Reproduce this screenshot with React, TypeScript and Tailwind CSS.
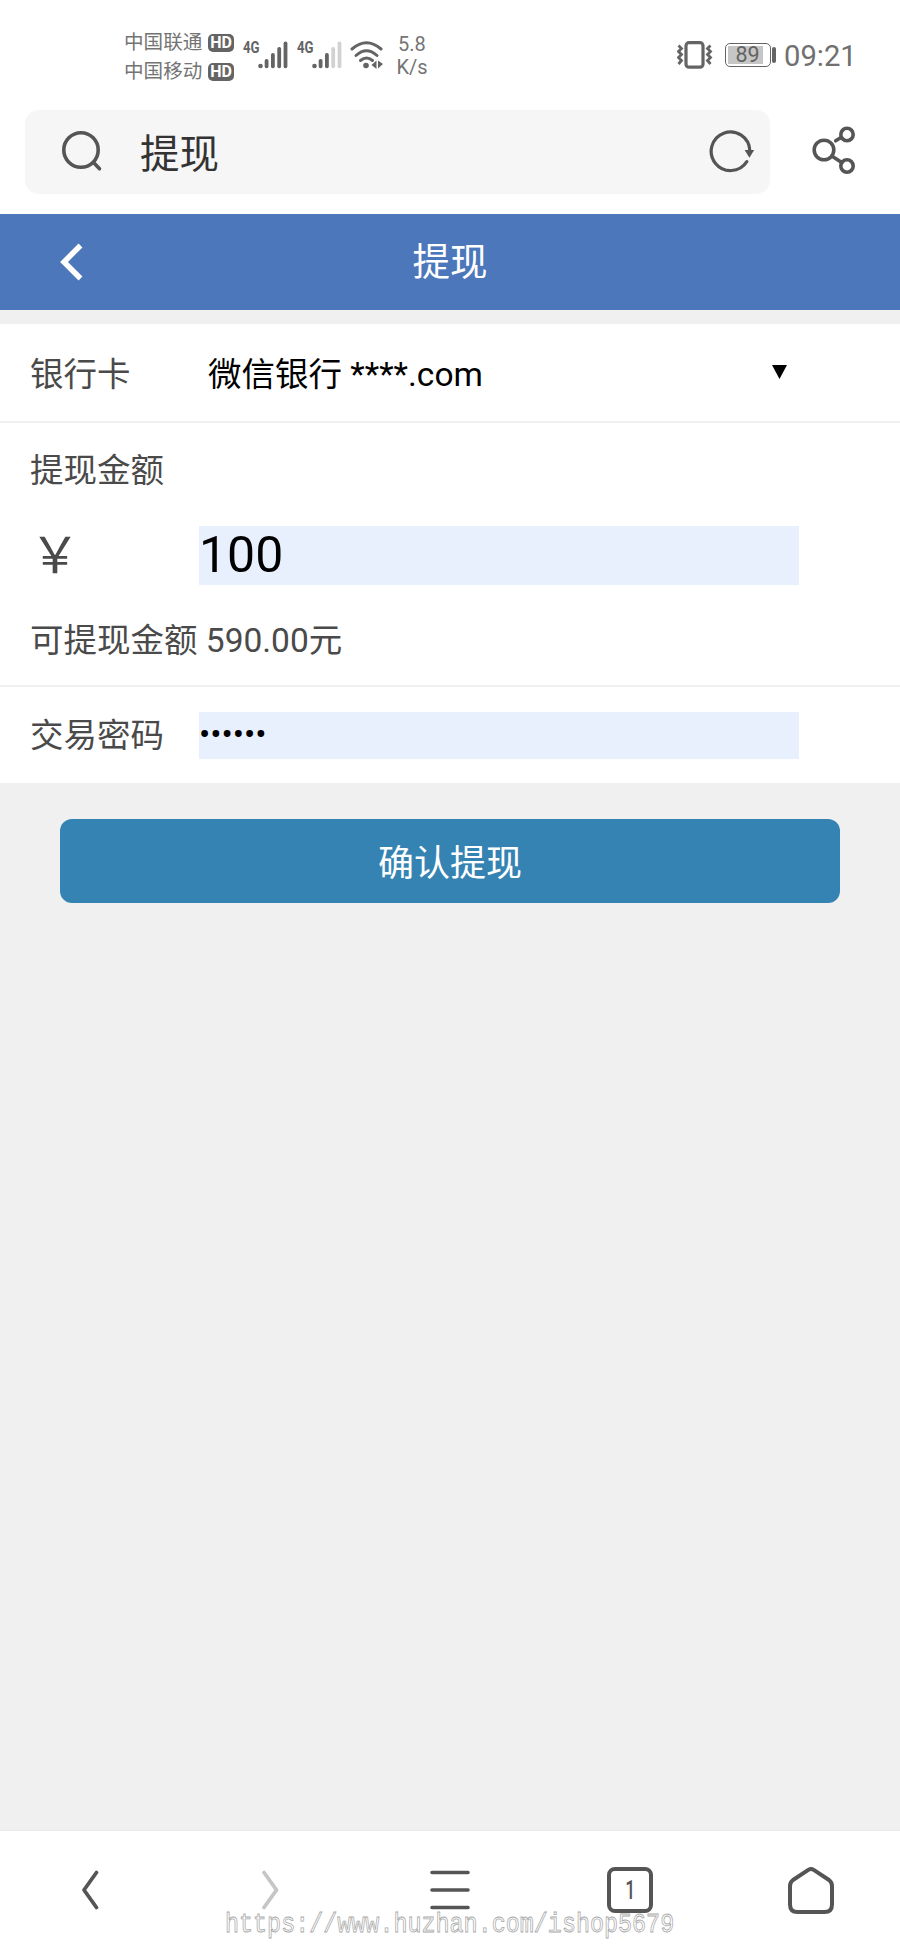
import React, { useState } from 'react';

const Bars = ({ dim = 0 }: { dim?: number }) => (
  <svg width="30" height="28" viewBox="0 0 30 28" fill="#646464">
    <circle cx="2.5" cy="25" r="2.3" />
    {[18, 12, 6, 0.5].map((y, i) => (
      <rect
        key={y}
        x={6.7 + i * 6.3}
        y={y}
        width="3.8"
        height={27.3 - y}
        rx="1.8"
        fill={i >= 4 - dim ? '#d2d2d2' : '#646464'}
      />
    ))}
  </svg>
);

const Signal = ({ dim = 0 }: { dim?: number }) => (
  <div className="flex">
    <span className="w-[15px] origin-left scale-x-[0.8] text-[16.5px] leading-[13px] font-bold">4G</span>
    <Bars dim={dim} />
  </div>
);

const Carrier = ({ name }: { name: string }) => (
  <div className="flex h-[29px] items-center">
    <span className="w-[84px] text-[19.6px] whitespace-nowrap text-[#747474]">{name}</span>
    <span className="flex h-[18px] w-[26px] items-center justify-center rounded-[5px] bg-[#646464] text-[16px] font-bold text-white">
      HD
    </span>
  </div>
);

const Wifi = () => (
  <svg width="34" height="28" viewBox="0 0 34 28" fill="none" stroke="#646464" strokeWidth="3" strokeLinecap="round">
    <path d="M2 8 Q16.5 -4.5 31 8" />
    <path d="M6 14.5 Q16.5 5 27 14.5" />
    <path d="M10.5 19.5 Q16.5 14.5 22.5 19.5" />
    <circle cx="16" cy="24.5" r="2.8" fill="#646464" stroke="none" />
    <path d="M21.5 24 L26.5 19.5 V28 Z M28 19.5 L33 23 L28 27.5 Z" fill="#646464" stroke="none" />
  </svg>
);

const Vibrate = () => (
  <svg width="36" height="28" viewBox="0 0 36 28" fill="none" stroke="#646464">
    <rect x="9" y="1.7" width="17" height="24.5" rx="3" strokeWidth="3.2" />
    <path d="M1.5 4.5 L4.5 7.5 L1.5 10.5 L4.5 13.5 L1.5 16.5 L4.5 19.5 L1.5 23" strokeWidth="2.8" />
    <path d="M33.5 4.5 L30.5 7.5 L33.5 10.5 L30.5 13.5 L33.5 16.5 L30.5 19.5 L33.5 23" strokeWidth="2.8" />
  </svg>
);

const StatusBar = () => (
  <div className="flex h-[110px] items-start pr-[43px] pl-[124px] leading-none text-[#646464]">
    <div className="mt-[28px] w-[119px]">
      <Carrier name="中国联通" />
      <Carrier name="中国移动" />
    </div>
    <div className="mt-[41px] flex gap-[9px]">
      <Signal />
      <Signal dim={2} />
    </div>
    <div className="mt-[41px] ml-[8px]">
      <Wifi />
    </div>
    <div className="mt-[33px] ml-[12px] w-[32px] text-center text-[20px] leading-[23px] text-[#747474]">
      <div>5.8</div>
      <div>K/s</div>
    </div>
    <div className="mt-[41px] ml-auto flex h-[28px] items-center">
      <Vibrate />
      <div className="ml-[12px] flex h-[24px] w-[46px] items-center rounded-[5px] border-[1.5px] border-[#646464] p-[2px]">
        <div className="flex h-full w-[35px] items-center justify-center bg-[#c6c6c6] pl-[4px] text-[21.5px]">89</div>
      </div>
      <div className="ml-px h-[16px] w-[4px] rounded-[2px] bg-[#646464]" />
      <span className="mt-[3px] ml-[8px] w-[73px] text-[29.2px] whitespace-nowrap text-[#707070]">09:21</span>
    </div>
  </div>
);

const AddressBar = () => (
  <div className="flex h-[104px] items-start pl-[25px]">
    <div className="flex h-[84px] w-[745px] items-center rounded-[14px] bg-[#f6f6f6] pr-[12px] pl-[35px]">
      <svg width="44" height="44" viewBox="0 0 44 44" fill="none" stroke="#555" strokeWidth="3.6" strokeLinecap="round">
        <circle cx="21" cy="20" r="17.2" />
        <path d="M33.5 32.5 L39.5 38.8" />
      </svg>
      <span className="mt-[6px] ml-[36px] text-[39.5px] leading-[56px] text-[#333]">提现</span>
      <svg className="ml-auto" width="50" height="44" viewBox="0 0 50 44">
        <path d="M38.8 31.6 A19.3 19.3 0 1 1 41.8 20.5" fill="none" stroke="#555" strokeWidth="3.2" strokeLinecap="round" />
        <path d="M36.6 20 H46.2 L41.4 27.7 Z" fill="#555" />
      </svg>
    </div>
    <svg className="mt-[15px] ml-[41px]" width="46" height="50" viewBox="0 0 46 50" fill="none" stroke="#555" strokeWidth="3.6" strokeLinecap="round">
      <circle cx="13" cy="25" r="9.8" />
      <circle cx="36" cy="9.5" r="6.2" />
      <circle cx="36" cy="41" r="6.2" />
      <path d="M24.7 15.8 L30 12.5 M21.5 31.5 L30 37" />
    </svg>
  </div>
);

const TabBar = () => (
  <nav className="grid h-[119px] grid-cols-5 justify-items-center bg-white pt-[35px]">
    <svg width="48" height="48" viewBox="0 0 48 48" fill="none" stroke="#555" strokeWidth="3.8" strokeLinecap="round" strokeLinejoin="round">
      <path d="M30.5 6.5 L18 24 L30.5 41.5" />
    </svg>
    <svg width="48" height="48" viewBox="0 0 48 48" fill="none" stroke="#c6c6c6" strokeWidth="3.8" strokeLinecap="round" strokeLinejoin="round">
      <path d="M18 6.5 L30.5 24 L18 41.5" />
    </svg>
    <svg width="48" height="48" viewBox="0 0 48 48" fill="none" stroke="#555" strokeWidth="3.6" strokeLinecap="round">
      <path d="M6 6.5 H42 M6 24 H42 M6 41.5 H42" />
    </svg>
    <div className="mt-px flex h-[46px] w-[46px] items-center justify-center rounded-[8px] border-4 border-[#555] text-[#555]">
      <span className="scale-x-[0.7] text-[25px] leading-none font-medium">1</span>
    </div>
    <svg width="48" height="48" viewBox="0 0 48 48" fill="none" stroke="#555" strokeWidth="4" strokeLinejoin="round">
      <path d="M22.3 3.9 Q25 2.3 27.7 3.9 L43 14 Q46 16.2 46 20 V38.5 Q46 46 38.5 46 H11.5 Q4 46 4 38.5 V20 Q4 16.2 7 14 Z" />
    </svg>
  </nav>
);

function App() {
  const [amount, setAmount] = useState('100');
  return (
    <div className="relative flex h-[1950px] w-[900px] flex-col overflow-hidden bg-white font-[Roboto,'Noto_Sans_CJK_SC',sans-serif] text-[#4a4a4a]">
      <StatusBar />
      <AddressBar />
      <header className="flex h-[96px] items-center bg-[#4c77bb] text-white">
        <svg className="ml-[57px]" width="28" height="40" viewBox="0 0 28 40" fill="none" stroke="#fff" strokeWidth="5.5">
          <path d="M23.5 3.5 L7 20 L23.5 36.5" />
        </svg>
        <h1 className="mr-[85px] flex-1 text-center text-[37.5px] leading-[56px]">提现</h1>
      </header>
      <main className="flex-1 border-b border-[#e8e8e8] bg-[#f0f0f0] pt-[14px] text-[33.5px] leading-[48px]">
        <section className="flex h-[99px] items-center border-b-2 border-[#f0f0f0] bg-white pt-[4px] pl-[30px]">
          <span className="w-[178px]">银行卡</span>
          <span className="w-[564px] text-black">微信银行 ****.com</span>
          <svg width="15" height="14" viewBox="0 0 15 14" className="-mt-[5px]">
            <path d="M0 0 H15 L7.5 14 Z" />
          </svg>
        </section>
        <section className="h-[264px] border-b-2 border-[#f0f0f0] bg-white pt-[24px] pl-[30px]">
          <div>提现金额</div>
          <div className="mt-[31px] flex h-[59px] items-center">
            <span className="w-[169px] text-[50px]">￥</span>
            <input
              className="h-[59px] w-[600px] bg-[#e8effd] pb-[2px] text-[50px] text-black"
              value={amount}
              onChange={(e) => setAmount(e.target.value)}
            />
          </div>
          <div className="mt-[32px]">可提现金额 590.00元</div>
        </section>
        <section className="flex h-[96px] items-center bg-white pl-[30px]">
          <span className="mt-[2px] w-[169px]">交易密码</span>
          <div className="flex h-[47px] w-[600px] items-center bg-[#e8effd] text-black">
            <span className="-mt-[2px] text-[33.4px] leading-[47px]">••••••</span>
          </div>
        </section>
        <button className="mx-[60px] mt-[36px] flex h-[84px] w-[780px] items-center justify-center rounded-[12px] bg-[#3583b2] pt-[5px] text-[36px] text-white">
          确认提现
        </button>
      </main>
      <TabBar />
      <div className="absolute top-[1909px] left-[225px] origin-top scale-y-[1.2] font-['Liberation_Mono',monospace] text-[23.4px] leading-[26px] text-white/60 [-webkit-text-stroke:0.7px_#a8a8a8]">
        https://www.huzhan.com/ishop5679
      </div>
    </div>
  );
}

export default App;
